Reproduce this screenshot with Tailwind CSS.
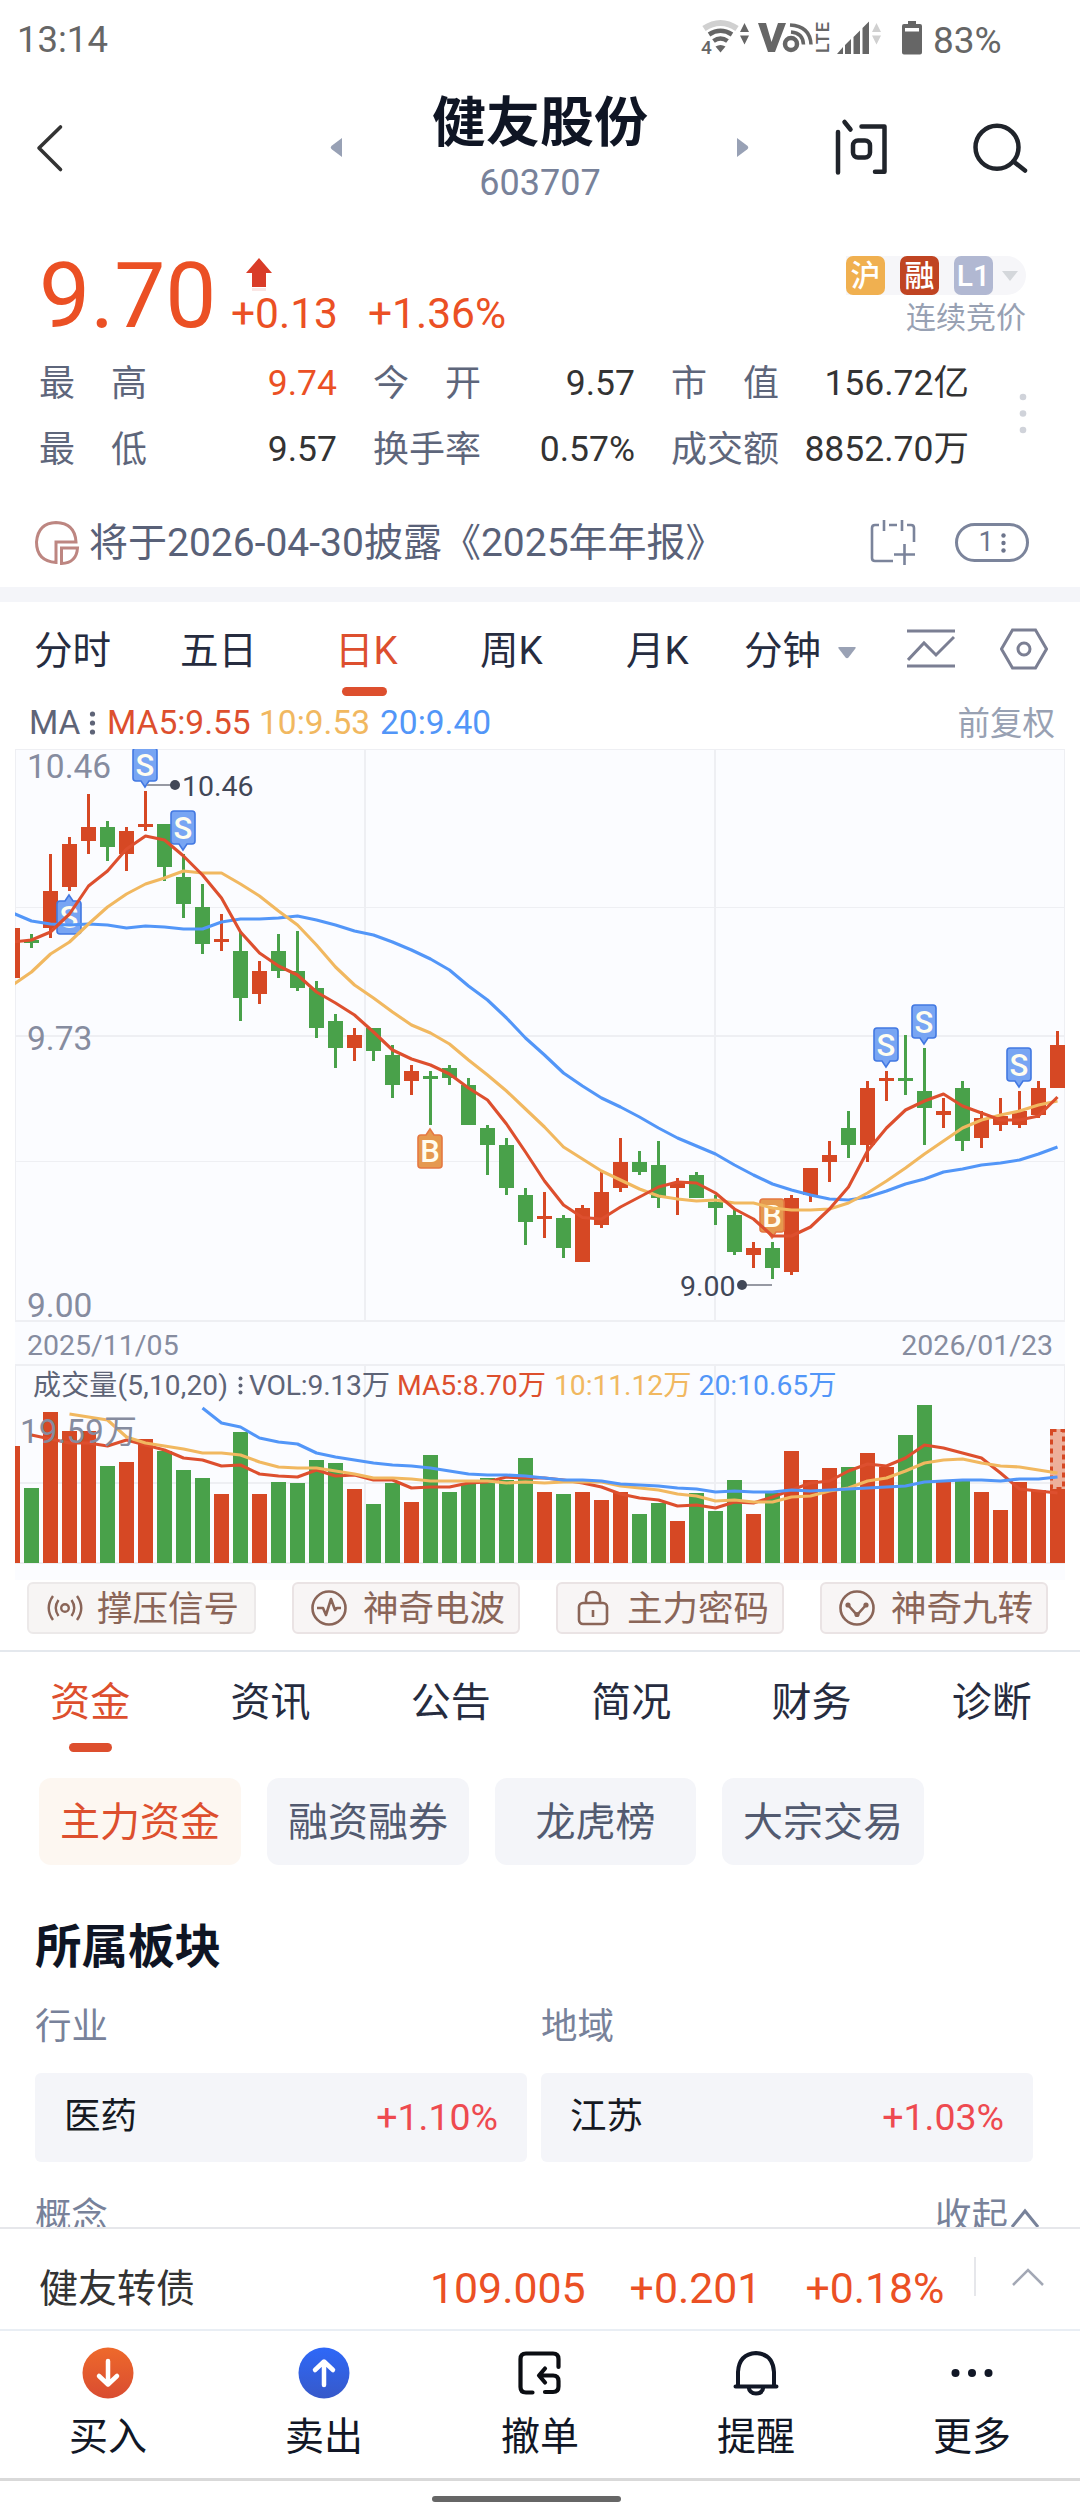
<!DOCTYPE html>
<html lang="zh-CN">
<head>
<meta charset="utf-8">
<title>健友股份 603707</title>
<script src="https://cdn.jsdelivr.net/npm/@tailwindcss/browser@4"></script>
</head>
<body class="bg-white">
<div class="flex h-[2520px] w-[1080px] flex-col overflow-hidden bg-white font-[Roboto,'Noto_Sans_CJK_SC',sans-serif] leading-none whitespace-nowrap text-[#333]">

  <!-- status bar -->
  <div class="flex h-[78px] shrink-0 items-center justify-between pt-[2px] pl-[17px] text-[36.5px] text-[#666]">
    <span>13:14</span>
    <svg width="380" height="76" viewBox="700 1 380 76" fill="#666">
      <g fill="none" stroke-width="4.500">
        <path d="M704 27.500Q720.500 16.500 737 27.500" stroke="#d0d0d0" stroke-width="6"/>
        <path d="M709 33.500Q720.500 26 732 33.500" stroke="#666"/>
        <path d="M713.500 40Q720.500 35 727.500 40" stroke="#666"/>
      </g>
      <path d="M715.500 45.500Q720.500 42.500 725.500 45.500L720.500 51.500Z"/>
      <text x="701" y="53" font-size="19" font-weight="500" stroke="#fff" stroke-width="3" paint-order="stroke">4</text>
      <path d="M744.500 22L749 31H740ZM744.500 43.500L749 34.500H740Z"/>
      <path d="M758 22H766L771.500 41L778 22H786L775 51H768Z"/>
      <circle cx="791" cy="43" r="6" fill="none" stroke="#666" stroke-width="4.500"/>
      <path d="M791 31Q803 32 803.500 43.500M790 24Q810 25 811 43.500" fill="none" stroke="#666" stroke-width="3.500"/>
      <text transform="translate(829 52) rotate(-90)" font-size="18" font-weight="500" textLength="31">LTE</text>
      <path d="M837 53L843 46V53ZM845 44L851 38V53H845ZM853.500 36L860 29.500V53H853.500ZM862.500 27L869 20.500V53H862.500Z"/>
      <path d="M876.500 22L881 31H872ZM876.500 43.500L881 34.500H872Z" fill="#d0d0d0"/>
      <path fill-rule="evenodd" d="M908 20H916V23H920Q922 23 922 25V51.500Q922 53.500 920 53.500H904Q902 53.500 902 51.500V25Q902 23 904 23H908ZM905 27V30.500H919V27Z"/>
      <text x="933" y="52" font-size="37">83%</text>
    </svg>
  </div>

  <!-- title bar -->
  <header class="flex h-[152px] shrink-0 items-start">
    <svg width="330" height="130" viewBox="0 78 330 130" fill="none" stroke="#333" stroke-width="3.600" stroke-linecap="round" stroke-linejoin="round"><path d="M60.500 127L39 148L60.500 169.500"/></svg>
    <svg class="mt-[57px]" width="14" height="24" viewBox="0 0 14 24" fill="#98a1b5"><path d="M12 3V22L2 14.500Q-0.500 12.500 2 10.500Z"/></svg>
    <div class="flex w-[392px] flex-col items-center">
      <h1 class="mt-[19px] text-[54px] font-bold text-[#0f1524]">健友股份</h1>
      <span class="mt-[14px] text-[36px] text-[#78829a]">603707</span>
    </div>
    <svg class="mt-[57px]" width="14" height="24" viewBox="0 0 14 24" fill="#98a1b5"><path d="M1 3V22L11 14.500Q13.500 12.500 11 10.500Z"/></svg>
    <svg width="330" height="130" viewBox="750 78 330 130" fill="none" stroke="#20242b" stroke-width="4.500" stroke-linecap="round" stroke-linejoin="round">
      <path d="M838 132V172.500M844.500 122L850.500 129.500M861.500 126.500H884.500V171.700H875"/>
      <rect x="853" y="140.500" width="17" height="17" rx="5"/>
      <circle cx="997" cy="147.300" r="21.500"/><path d="M1013.500 161.500L1025 170.500"/>
    </svg>
  </header>

  <!-- quote -->
  <section class="flex h-[120px] shrink-0 items-start justify-between pr-[54px] pl-[39px]">
    <div class="flex">
      <span class="mt-[21px] w-[192px] text-[91px] text-[#eb5024]">9.70</span>
      <div class="flex flex-col">
        <svg class="mt-[28px] ml-[15px]" width="26" height="34" viewBox="0 0 26 34"><path d="M13 0L26 15H20V29H6V15H0Z" fill="#d93c28"/><path d="M6 30H20V33H6Z" fill="#fae6e4"/></svg>
        <div class="mt-[1px] flex gap-[30px] text-[42.5px] text-[#eb5024]"><span>+0.13</span><span>+1.36%</span></div>
      </div>
    </div>
    <div class="flex flex-col items-end">
      <div class="mt-[26px] flex h-[39px] items-center gap-[15px] rounded-r-full bg-[#f6f6f9] text-[30px] font-medium text-white">
        <span class="flex size-[39px] items-center justify-center rounded-[7px] bg-[#f0b050]">沪</span>
        <span class="flex size-[39px] items-center justify-center rounded-[7px] bg-[#c04422]">融</span>
        <span class="flex items-center"><span class="flex size-[39px] items-center justify-center rounded-[7px] bg-[#b1b8d2]">L1</span><svg class="mr-[8px] ml-[9px]" width="16" height="10" viewBox="0 0 16 10" fill="#d4d7db"><path d="M0 0H16L8 10Z"/></svg></span>
      </div>
      <span class="mt-[8px] text-[30px] text-[#98a1b3]">连续竞价</span>
    </div>
  </section>

  <section class="flex h-[133px] shrink-0 pl-[39px] text-[36px]">
    <div class="grid w-[930px] grid-cols-[298px_298px_334px] grid-rows-[66px_66px] pt-px text-[#5e667b]">
      <div class="flex items-center justify-between"><span class="flex w-[108px] justify-between"><span>最</span><span>高</span></span><span class="text-[35.5px] text-[#eb5024]">9.74</span></div>
      <div class="flex items-center justify-between pl-[36px]"><span class="flex w-[108px] justify-between"><span>今</span><span>开</span></span><span class="text-[35.5px] text-[#333]">9.57</span></div>
      <div class="flex items-center justify-between pl-[36px]"><span class="flex w-[108px] justify-between"><span>市</span><span>值</span></span><span class="text-[35.5px] text-[#333]">156.72亿</span></div>
      <div class="flex items-center justify-between"><span class="flex w-[108px] justify-between"><span>最</span><span>低</span></span><span class="text-[35.5px] text-[#333]">9.57</span></div>
      <div class="flex items-center justify-between pl-[36px]"><span>换手率</span><span class="text-[35.5px] text-[#333]">0.57%</span></div>
      <div class="flex items-center justify-between pl-[36px]"><span>成交额</span><span class="text-[35.5px] text-[#333]">8852.70万</span></div>
    </div>
    <svg class="mt-[43px] ml-[50px]" width="8" height="44" viewBox="0 0 8 44" fill="#d0d3da"><circle cx="4" cy="4" r="3.300"/><circle cx="4" cy="20.500" r="3.300"/><circle cx="4" cy="37" r="3.300"/></svg>
  </section>

  <!-- notice -->
  <section class="flex h-[104px] shrink-0 items-center pt-[15px] pr-[51px] pl-[34px]">
    <svg width="46" height="48" viewBox="34 519 46 48" fill="none" stroke="#bd8681" stroke-width="3"><path d="M56 562.500Q36.500 561 36.500 542Q38 523 56 522.500Q75 523 76 542H56Z"/><path d="M61.500 548H77.500Q76.500 563 61.500 563.500Z"/></svg>
    <span class="mt-[2px] ml-[9px] text-[39px] text-[#596178]">将于2026-04-30披露《2025年年报》</span>
    <svg class="ml-auto" width="48" height="48" viewBox="869 518 48 48" fill="none" stroke="#7b849b" stroke-width="2.600"><path d="M879 524H875Q872 524 872 527V557Q872 560 875 560H893M907 524H911Q914 524 914 527V541M884 519V530M902 519V530M889 524H897M904.500 543V564M894 553.500H915"/></svg>
    <span class="ml-[38px] flex h-[39px] w-[74px] items-center justify-center gap-[7px] rounded-full border-3 border-[#7b849b] text-[27px] text-[#6d758c]">1<svg width="5" height="20" viewBox="0 0 5 20" fill="#6d758c"><circle cx="2.500" cy="2.500" r="2.200"/><circle cx="2.500" cy="10" r="2.200"/><circle cx="2.500" cy="17.500" r="2.200"/></svg></span>
  </section>
  <div class="h-[15px] shrink-0 bg-[#f4f5f9]"></div>

  <!-- period tabs -->
  <nav class="flex h-[94px] shrink-0 items-center pt-px pl-[34px] text-[38.5px] text-[#262c3f]">
    <span class="mt-[3px] w-[146px]">分时</span>
    <span class="mt-[3px] w-[155px]">五日</span>
    <span class="relative flex h-full w-[145px] items-center pt-[3px] text-[#dd4f2e]">日K<i class="absolute bottom-0 left-[7px] h-[9px] w-[45px] rounded-full bg-[#dd4f2e]"></i></span>
    <span class="mt-[3px] w-[146px]">周K</span>
    <span class="mt-[3px] w-[118px]">月K</span>
    <span class="mt-[3px]">分钟</span>
    <svg class="mt-[7px] ml-[17px]" width="18" height="12" viewBox="0 0 18 12" fill="#9aa2b5"><path d="M1 0H17Q18.500 0 17 2L10.500 10.500Q9 12 7.500 10.500L1 2Q-0.500 0 1 0Z"/></svg>
    <svg class="mt-[-2px] ml-[51px]" width="48" height="40" viewBox="0 0 48 40" fill="none" stroke="#7b7f93" stroke-width="3"><path d="M0 2H48M0 37H48M1 31L17 14L29 26L47 8"/></svg>
    <svg class="mt-[-2px] ml-[45px]" width="48" height="42" viewBox="0 0 48 42" fill="none" stroke="#7b7f93" stroke-width="3"><path d="M12.500 2H35.500L46.500 21L35.500 40H12.500L1.500 21Z"/><circle cx="24" cy="21" r="6"/></svg>
  </nav>
  <div class="flex h-[53px] shrink-0 items-center pr-[25px] pl-[29px] text-[33.5px]">
    <span class="w-[60px] text-[#5e6477]">MA</span>
    <svg class="mr-[11px]" width="7" height="24" viewBox="0 0 7 24" fill="#5e6477"><circle cx="3.500" cy="3" r="2.600"/><circle cx="3.500" cy="12" r="2.600"/><circle cx="3.500" cy="21" r="2.600"/></svg>
    <span class="w-[152px] text-[#dd4f2e]">MA5:9.55</span>
    <span class="w-[121px] text-[#f1b860]">10:9.53</span>
    <span class="text-[#5296f8]">20:9.40</span>
    <span class="mt-[3px] ml-auto text-[32.5px] text-[#98a1b3]">前复权</span>
  </div>

  <!-- price and volume charts -->
  <svg id="chart" class="ml-[15px] shrink-0 bg-[#fbfcff]" width="1050" height="831" viewBox="15 749 1050 831"></svg>

  <!-- strategy chips -->
  <div class="flex h-[72px] shrink-0 items-start gap-[36px] border-b-2 border-[#e4e8ed] pt-[2px] pl-[27px] text-[35.5px] text-[#8a6558]">
    <span class="flex h-[52px] w-[229px] items-center rounded-[6px] border-2 border-[#ece9e9] bg-[#f7f5f4] pl-[18px]">
      <svg class="mr-[14px]" width="36" height="28" viewBox="0 0 36 28" fill="none" stroke="#8a6558" stroke-width="2.400"><circle cx="18" cy="14" r="3.800"/><path d="M11.500 6Q6 14 11.500 22M24.500 6Q30 14 24.500 22M6 2Q-2.500 14 6 26M30 2Q38.500 14 30 26"/></svg><span class="mt-[3px]">撑压信号</span></span>
    <span class="flex h-[52px] w-[228px] items-center rounded-[6px] border-2 border-[#eae3e4] bg-[#f8f5f5] pl-[17px]">
      <svg class="mr-[16px]" width="36" height="36" viewBox="0 0 36 36" fill="none" stroke="#8a6558" stroke-width="2.600" stroke-linejoin="round"><circle cx="18" cy="18" r="16.500"/><path d="M6 18H12L15 25L20 9L24 20L26 18H30"/></svg><span class="mt-[3px]">神奇电波</span></span>
    <span class="flex h-[52px] w-[228px] items-center rounded-[6px] border-2 border-[#eae3e4] bg-[#f8f5f5] pl-[19px]">
      <svg class="mr-[18px]" width="32" height="36" viewBox="0 0 32 36" fill="none" stroke="#8a6558" stroke-width="2.600"><rect x="2" y="13" width="28" height="21" rx="4"/><path d="M9 13V9Q9 2 16 2Q23 2 23 9V13M16 20V27"/></svg><span class="mt-[3px]">主力密码</span></span>
    <span class="flex h-[52px] w-[228px] items-center rounded-[6px] border-2 border-[#eae3e4] bg-[#f8f5f5] pl-[17px]">
      <svg class="mr-[16px]" width="36" height="36" viewBox="0 0 36 36" fill="none" stroke="#8a6558" stroke-width="2.600"><circle cx="18" cy="18" r="16.500"/><path d="M9 15L18 25L27 15"/><g fill="#8a6558" stroke="none"><circle cx="9" cy="15" r="2.600"/><circle cx="27" cy="15" r="2.600"/><circle cx="18" cy="24.500" r="2.600"/></g></svg><span class="mt-[3px]">神奇九转</span></span>
  </div>

  <!-- content tabs -->
  <nav class="grid h-[100px] w-[1082px] shrink-0 grid-cols-6 items-center pt-[2px] text-center text-[40px] text-[#262c3f]">
    <span class="relative flex h-full items-center justify-center text-[#dd4f2e]">资金<i class="absolute bottom-0 left-[69px] h-[9px] w-[43px] rounded-full bg-[#dd4f2e]"></i></span>
    <span>资讯</span><span>公告</span><span>简况</span><span>财务</span><span>诊断</span>
  </nav>
  <div class="mt-[26px] flex h-[87px] shrink-0 gap-[26px] pl-[39px] text-[40px] text-[#525a70]">
    <span class="flex w-[202px] items-center justify-center rounded-[12px] bg-[#fdf7f1] pt-[3px] text-[#dd4f2e]">主力资金</span>
    <span class="flex w-[202px] items-center justify-center rounded-[12px] bg-[#f4f5f9] pt-[3px]">融资融券</span>
    <span class="flex w-[201px] items-center justify-center rounded-[12px] bg-[#f4f5f9] pt-[3px]">龙虎榜</span>
    <span class="flex w-[202px] items-center justify-center rounded-[12px] bg-[#f4f5f9] pt-[3px]">大宗交易</span>
  </div>

  <!-- sectors -->
  <section class="h-[362px] shrink-0 overflow-hidden px-[35px] pt-[59px]">
    <h2 class="h-[46px] text-[46.5px] font-bold text-[#0f1524]">所属板块</h2>
    <div class="mt-[39px] grid w-[998px] grid-cols-2 gap-x-[14px] text-[36.5px]">
      <span class="h-[64px] text-[#78829a]">行业</span><span class="h-[64px] text-[#78829a]">地域</span>
      <div class="flex h-[89px] items-center justify-between rounded-[6px] bg-[#f4f5f9] pr-[29px] pl-[29px]"><span class="text-[#151922]">医药</span><span class="text-[37.5px] text-[#ee4a50]">+1.10%</span></div>
      <div class="flex h-[89px] items-center justify-between rounded-[6px] bg-[#f4f5f9] pr-[29px] pl-[29px]"><span class="text-[#151922]">江苏</span><span class="text-[37.5px] text-[#ee4a50]">+1.03%</span></div>
    </div>
    <div class="mt-[37px] flex justify-between text-[36.5px] text-[#78829a]"><span>概念</span><span class="-mr-[30px] flex w-[140px]">收起<svg class="mt-[8px] ml-[3px]" width="28" height="22" viewBox="0 0 28 22" fill="none" stroke="#78829a" stroke-width="3"><path d="M1 20L14 4L27 20"/></svg></span></div>
  </section>

  <!-- convertible bond -->
  <div class="flex h-[102px] shrink-0 items-center border-t-2 border-[#e6e7eb] pt-[19px] pl-[39px]">
    <span class="mt-[2px] w-[391px] text-[39px]">健友转债</span>
    <div class="flex gap-[44px] text-[42.8px] text-[#eb5024]"><span>109.005</span><span>+0.201</span><span>+0.18%</span></div>
    <i class="mt-[-24px] ml-[30px] h-[39px] w-[2px] bg-[#e6e7eb]"></i>
    <svg class="mt-[-24px] ml-[36px]" width="32" height="20" viewBox="0 0 32 20" fill="none" stroke="#a3a8b5" stroke-width="2.500"><path d="M1 18L16 3L31 18"/></svg>
  </div>

  <!-- trade bar -->
  <nav class="grid h-[149px] shrink-0 grid-cols-5 border-t-2 border-[#e9eef4] text-[39px] text-[#111726]">
    <div class="flex flex-col items-center pt-[13px]"><svg width="58" height="58" viewBox="-29 -29 58 58"><defs><linearGradient id="buy" x2="0" y2="1"><stop stop-color="#ee692b"/><stop offset="1" stop-color="#d94c31"/></linearGradient></defs><circle r="25.500" fill="url(#buy)"/><path d="M0-12V11M-9 3L0 11.500L9 3" fill="none" stroke="#fff" stroke-width="4.500" stroke-linecap="round" stroke-linejoin="round"/></svg><span class="mt-[16px]">买入</span></div>
    <div class="flex flex-col items-center pt-[13px]"><svg width="58" height="58" viewBox="-29 -29 58 58"><defs><linearGradient id="sell" x2="0" y2="1"><stop stop-color="#2e68f8"/><stop offset="1" stop-color="#3759c9"/></linearGradient></defs><circle r="25.500" fill="url(#sell)"/><path d="M0 12V-11M-9-3L0-11.500L9-3" fill="none" stroke="#fff" stroke-width="4.500" stroke-linecap="round" stroke-linejoin="round"/></svg><span class="mt-[16px]">卖出</span></div>
    <div class="flex flex-col items-center pt-[13px]"><svg width="58" height="58" viewBox="-29 -29 58 58" fill="none" stroke="#0b0d12" stroke-width="4.200" stroke-linecap="round" stroke-linejoin="round"><path d="M18.500-6V-14Q18.500-19.500 13-19.500H-14Q-19.500-19.500-19.500-14V14Q-19.500 19.500-14 19.500H-7.500M5-4.500L-1 2.500L5 9.500M0 2.500H13Q18.500 2.500 18.500 8V13.500Q18.500 19 13 19H5"/></svg><span class="mt-[16px]">撤单</span></div>
    <div class="flex flex-col items-center pt-[13px]"><svg width="58" height="58" viewBox="-29 -29 58 58" fill="none" stroke="#111726" stroke-width="4" stroke-linecap="round"><path d="M-18 13V-1Q-17-19 0-20Q17-19 18-1V13M-20.500 13.500H20.500M-7.500 14Q-6.500 20.500 0 20.500Q6.500 20.500 7.500 14"/></svg><span class="mt-[16px]">提醒</span></div>
    <div class="flex flex-col items-center pt-[13px]"><svg width="58" height="58" viewBox="-29 -29 58 58" fill="#111726"><circle cx="-16.500" r="4"/><circle r="4"/><circle cx="16.500" r="4"/></svg><span class="mt-[16px]">更多</span></div>
  </nav>
  <div class="flex h-[42px] shrink-0 justify-center border-t-3 border-[#d9d9d9] pt-[15px] pr-[27px]"><i class="h-[6px] w-[189px] rounded-full bg-[#666]"></i></div>
</div>

<script>
const UP = '#d64824', DOWN = '#49a14a', MA5 = '#dd4f2e', MA10 = '#f1b860', MA20 = '#5296f8', GRID = '#eeeff3';
const cx = i => 12.5 + 19 * i;
// direction, high, body top, body bottom, low
const candles = `R 928 928 978 978|G 934 940 943 948|R 854 891 928 938|R 837 844 887 891|R 794 827 841 854|G 821 827 847 861|R 827 831 854 871|R 791 824 827 831|G 824 824 867 881|G 854 877 904 918|G 884 907 944 954|R 914 939 942 951|G 931 951 998 1021|R 961 971 994 1004|G 934 951 971 978|G 931 971 988 991|G 981 988 1028 1038|G 1014 1021 1048 1068|R 1028 1035 1048 1061|G 1028 1028 1051 1061|G 1045 1055 1085 1098|R 1065 1071 1081 1095|G 1071 1076 1079 1125|G 1065 1068 1078 1085|G 1078 1085 1125 1125|G 1125 1128 1145 1175|G 1138 1145 1188 1195|G 1188 1195 1222 1245|R 1192 1216 1219 1238|G 1215 1218 1248 1258|R 1205 1208 1262 1262|R 1172 1192 1225 1228|R 1138 1162 1188 1192|G 1151 1162 1172 1175|G 1141 1165 1198 1208|R 1178 1183 1188 1215|G 1172 1175 1198 1198|G 1195 1202 1208 1225|G 1209 1215 1252 1255|R 1242 1248 1255 1268|G 1242 1248 1268 1279|R 1195 1198 1272 1275|R 1168 1168 1195 1202|R 1141 1155 1162 1182|G 1111 1128 1145 1158|R 1081 1088 1145 1162|R 1071 1078 1081 1101|G 1035 1078 1081 1095|G 1048 1091 1108 1145|R 1098 1111 1115 1128|G 1081 1088 1141 1151|R 1111 1118 1138 1148|R 1098 1116 1125 1131|R 1091 1111 1125 1128|R 1081 1088 1115 1118|R 1031 1045 1088 1088`
  .split('|').map(s => s.split(' ').map((v, k) => k ? +v : v));
const price5 = [942,940,932,914,886,871,849,836,840,856,875,898,932,953,966,975,992,1003,1015,1032,1050,1059,1065,1074,1088,1100,1124,1152,1181,1205,1217.5,1219,1207,1197,1187,1182,1183,1193,1209,1219,1236,1236,1227,1209,1187,1151,1128,1110,1101,1094,1106,1113,1120,1120,1116,1097];
const price10 = [985,972,954,942,924,907,894,884,878,871,873,873,884,896,911,925,945,967,985,998,1012,1025,1033,1044,1060,1075,1091,1109,1127,1147,1159,1171,1180,1189,1196,1199,1201,1200,1203,1203,1208,1210,1210,1209,1203,1193,1181,1168,1154,1141,1128,1120,1115,1111,1105,1101];
const price20 = [913,921,924,925,924,925,928,926,927,929,929,922,919,919,918,916,920,925,931,935,942,950,959,970,986,1000,1018,1038,1055,1073,1086,1098,1107,1117,1128,1138,1146,1154,1165,1175,1184,1190,1195,1199,1200,1197,1191,1184,1179,1172,1169,1165,1163,1160,1154,1147];
const volTop = [1446,1488,1412,1431,1431,1466,1462,1439,1451,1470,1478,1494,1432,1494,1482,1483,1460,1463,1489,1504,1483,1502,1455,1492,1483,1478,1480,1458,1492,1494,1492,1500,1492,1514,1503,1521,1493,1511,1480,1514,1493,1451,1480,1468,1467,1453,1467,1435,1405,1482,1480,1492,1510,1482,1490,1489];
const vol5 = [1435,1439,1443,1443,1446,1440,1445,1450,1458,1460,1466,1465,1474,1476,1477,1470,1476,1475,1480,1480,1488,1487,1487,1483,1482,1477,1478,1478,1480,1483,1487,1494,1498,1500,1506,1505,1508,1502,1503,1497,1490,1483,1481,1471,1464,1466,1458,1445,1448,1453,1458,1473,1489,1491,1493];
const vol10 = [1414,1417,1420,1437,1443,1446,1449,1453,1453,1455,1462,1467,1468,1468,1471,1474,1478,1478,1479,1481,1481,1481,1481,1483,1482,1483,1482,1482,1482,1486,1488,1490,1494,1496,1501,1500,1502,1502,1497,1496,1491,1488,1481,1478,1471,1463,1460,1459,1463,1466,1467,1470,1473];
const vol20 = [1408,1423,1427,1438,1442,1444,1453,1457,1460,1463,1465,1466,1468,1471,1474,1475,1475,1476,1478,1480,1480,1481,1484,1485,1486,1488,1489,1492,1491,1492,1492,1490,1491,1490,1489,1488,1487,1486,1482,1481,1480,1480,1481,1479,1479,1477];

const line = (ys, from, color) => `<polyline fill="none" stroke="${color}" stroke-width="3.1" stroke-linejoin="round" points="${ys.map((y, i) => cx(i + from) + ',' + y).join(' ')}"/>`;
const rect = (x, y, w, h, fill) => `<rect x="${x}" y="${y}" width="${w}" height="${h}" fill="${fill}"/>`;
const label = (x, y, size, fill, t, extra = '') => `<text x="${x}" y="${y}" font-size="${size}" fill="${fill}" ${extra}>${t}</text>`;

// trade marker: letter, candle index, box top, pointing down or up
const marker = (ch, i, top, down) => {
  const x = cx(i) - 0.5, b = top + 34, [fill, edge] = ch === 'S' ? ['#78a5f3', '#4278e2'] : ['#e5994f', '#e57842'];
  const l = x - 12, r = x + 12;
  const d = down
    ? `M${l + 3} ${top}H${r - 3}Q${r} ${top} ${r} ${top + 3}V${b - 4}Q${r} ${b - 1} ${r - 3} ${b - 1}H${x + 4}L${x} ${b + 5}L${x - 4} ${b - 1}H${l + 3}Q${l} ${b - 1} ${l} ${b - 4}V${top + 3}Q${l} ${top} ${l + 3} ${top}Z`
    : `M${l + 3} ${b}H${r - 3}Q${r} ${b} ${r} ${b - 3}V${top + 4}Q${r} ${top + 1} ${r - 3} ${top + 1}H${x + 4}L${x} ${top - 5}L${x - 4} ${top + 1}H${l + 3}Q${l} ${top + 1} ${l} ${top + 4}V${b - 3}Q${l} ${b} ${l + 3} ${b}Z`;
  return `<path d="${d}" fill="${fill}" stroke="${edge}" stroke-width="1.6"/>` + label(x, top + 28, 31, '#fffdf0', ch, 'text-anchor="middle" font-weight="500"');
};

let s = '';
for (const [y, h] of [[749, 1], [907, 1], [1035, 2], [1161, 1], [1320, 2], [1364, 2], [1482, 2], [1562, 2]]) s += rect(15, y, 1050, h, GRID);
for (const [x, w] of [[15, 1], [364, 2], [714, 2], [1064, 1]]) s += rect(x, 749, w, 572, GRID) + rect(x, 1365, w, 198, GRID);

candles.forEach(([d, hi, t, b, lo], i) => {
  const c = d === 'R' ? UP : DOWN;
  s += rect(cx(i) - 7.5, t, 15, b - t, c);
  if (hi !== t || lo !== b) s += rect(cx(i) - 1.5, hi, 3, lo - hi, c);
});
s += marker('S', 7, 748, true) + marker('S', 9, 811, true) + marker('S', 3, 900, false)
  + marker('S', 46, 1028, true) + marker('S', 48, 1005, true) + marker('S', 53, 1048, true)
  + marker('B', 22, 1134, false) + marker('B', 40, 1199, true);
s += line(price20, 0, MA20) + line(price10, 0, MA10) + line(price5, 0, MA5);
s += rect(147, 784, 24, 2, '#9699a3') + `<circle cx="175" cy="785" r="5" fill="#414757"/>` + label(182, 796, 28.5, '#414757', '10.46');
s += rect(746, 1284, 26, 2, '#9699a3') + `<circle cx="742" cy="1285" r="5" fill="#414757"/>` + label(680, 1296, 28.5, '#414757', '9.00');
s += label(27, 778, 33.5, '#868c9f', '10.46') + label(27, 1050, 33.5, '#868c9f', '9.73') + label(27, 1317, 33.5, '#868c9f', '9.00');
s += label(27, 1355, 28.5, '#868c9f', '2025/11/05') + label(1053, 1355, 28.5, '#868c9f', '2026/01/23', 'text-anchor="end"');

candles.forEach(([d], i) => { s += rect(cx(i) - 7.5, volTop[i], 15, 1563 - volTop[i], d === 'R' ? UP : DOWN); });
s += rect(1050, 1429, 15, 60, '#edb09c') + `<rect x="1051.500" y="1430.500" width="12" height="58" fill="none" stroke="${UP}" stroke-width="3" stroke-dasharray="5 4"/>`;
s += line(vol5, 1, MA5) + line(vol10, 3, MA10) + line(vol20, 10, MA20);
s += label(20, 1443, 33, '#868c9f', '19.59万', 'textLength="117"');
s += label(33, 1395, 28, '#5e6477', '成交量(5,10,20)', 'textLength="195"');
for (const y of [1378.5, 1385.5, 1392.5]) s += `<circle cx="240.500" cy="${y}" r="2" fill="#5e6477"/>`;
s += label(249, 1395, 28.3, '#5e6477', 'VOL:9.13万', 'textLength="141"') + label(397, 1395, 28.3, MA5, 'MA5:8.70万', 'textLength="149"')
  + label(554, 1395, 28.3, MA10, '10:11.12万', 'textLength="137.5"') + label(698.5, 1395, 28.3, MA20, '20:10.65万', 'textLength="138"');
document.getElementById('chart').innerHTML = s;
</script>
</body>
</html>
